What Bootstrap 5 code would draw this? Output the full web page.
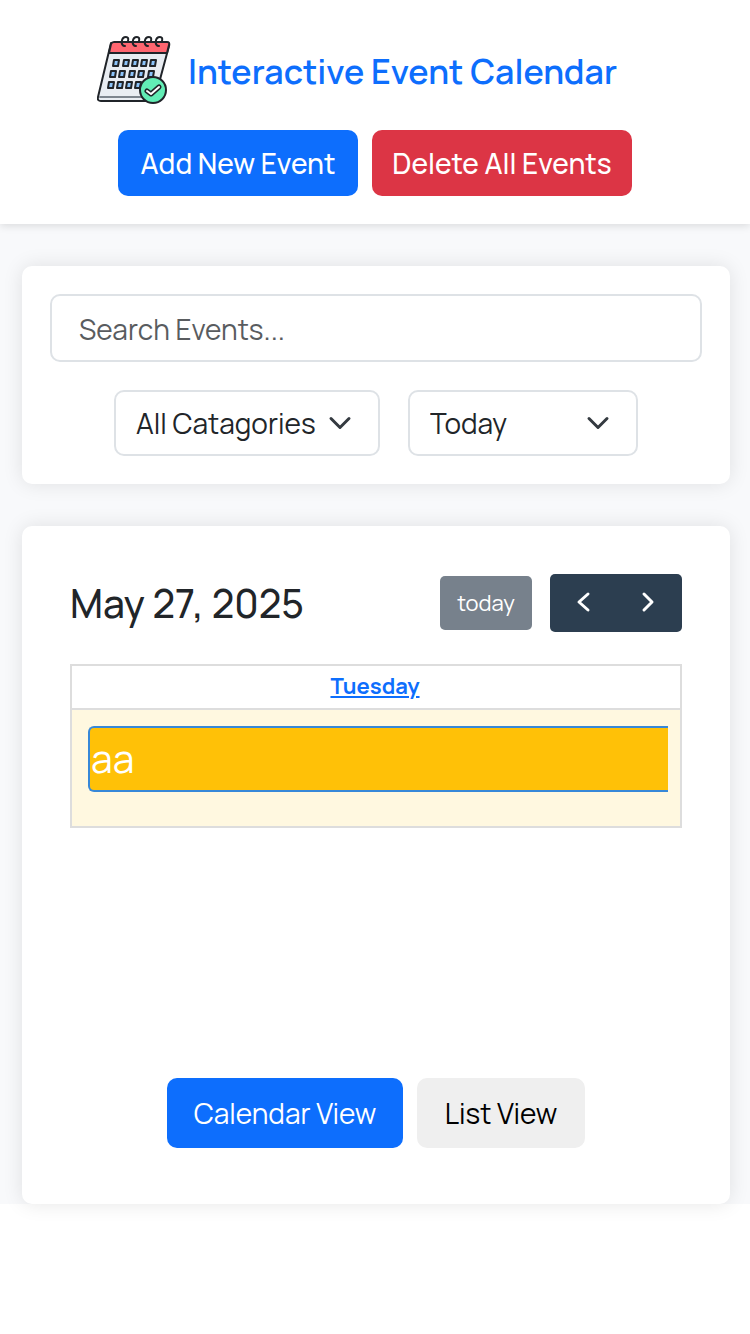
<!DOCTYPE html>
<html lang="en">
<head>
<meta charset="utf-8">
<meta name="viewport" content="width=device-width, initial-scale=1">
<title>Interactive Event Calendar</title>
<link href="https://cdn.jsdelivr.net/npm/bootstrap@5.3.0/dist/css/bootstrap.min.css" rel="stylesheet">
<style>
  body { font-family: Manrope, Inter, "Open Sans", sans-serif; font-size: 28px; background: #fff; }
  .site-header { padding: 28px 20px; box-shadow: 0 2px 8px rgba(0,0,0,.12); }
  .brand-row { height: 88px; gap: 17px; margin-bottom: 14px; padding: 0 36px 2px 0; }
  .brand-row h1 { font-size: 34px; font-weight: 600; }
  .btn-gap { gap: 14px; }
  .app-btn { height: 66px; padding: 0 20px; font-size: 28px; font-weight: 500; border: 0; border-radius: 10px; }
  .add-btn { width: 240px; }
  .delete-btn { width: 260px; }
  .page-area { background: #f8f9fb; padding: 42px 20px 0 22px; }
  .panel { background: #fff; border-radius: 10px; box-shadow: 0 0 20px rgba(0,0,0,.1); }
  .filters { padding: 28px; margin-bottom: 42px; }
  .filters .form-control { height: 68px; padding: 2px 27px 0; font-size: 28px; font-weight: 400; border: 2px solid #dee2e6; border-radius: 10px; }
  .filters .form-control::placeholder { color: #595c5f; opacity: 1; }
  .filter-row { gap: 28px; margin-top: 28px; }
  .filters .form-select { height: 66px; padding: 0 56px 0 20px; font-size: 28px; font-weight: 400; border: 2px solid #dee2e6; border-radius: 10px; background-size: 24px 24px; background-position: right 26px center; }
  .filters .category-select { width: 266px; }
  .filters .date-select { width: 230px; }
  .calendar-panel { padding: 48px 48px 56px; }
  .cal-toolbar { height: 58px; margin-bottom: 32px; }
  .cal-toolbar h2 { font-size: 39px; font-weight: 500; }
  .cal-actions { gap: 18px; }
  .today-btn { width: 92px; height: 54px; padding: 0; font-size: 22px; font-weight: 400; border: 0; border-radius: 5px; }
  .today-btn:disabled { background: #77818c; color: #fff; opacity: 1; }
  .step-group { background: #2c3e50; border-radius: 5px; }
  .step-group .btn { width: 66px; height: 58px; padding: 0; border: 0; color: #fff; display: flex; align-items: center; justify-content: center; }
  .cal-body { min-height: 414px; }
  .cal-table { width: 100%; border-collapse: collapse; }
  .cal-table th, .cal-table td { border: 2px solid #ddd; }
  .cal-table th { height: 44px; padding: 0 2px 2px 0; font-size: 22px; line-height: 24px; font-weight: 700; text-align: center; }
  .cal-table td { height: 118px; padding: 16px 12px 0 16px; background: #fff8e0; vertical-align: top; }
  .event-bar { display: flex; align-items: center; height: 66px; padding: 0 1px 2px; font-size: 39px; line-height: 40px; font-weight: 400; color: #fff; background: #ffc107; border: 2px solid #3788d8; border-right: 0; border-radius: 6px 0 0 6px; text-decoration: none; }
  .view-btn { height: 70px; font-weight: 400; }
  .calendar-view-btn { width: 236px; }
  .list-view-btn { width: 168px; background: #efefef; color: #000; }
</style>
</head>
<body class="min-vh-100">
<header class="site-header bg-white position-relative z-1">
  <div class="brand-row d-flex align-items-center justify-content-center">
    <svg width="74" height="70" viewBox="0 0 74 70" fill="none" stroke="#202429" stroke-width="2" stroke-linejoin="round" stroke-linecap="round" aria-hidden="true">
      <path d="M14 7H70Q73 7 72 10L58 62Q57 65 54 65H4Q0 65 1 61Z" fill="#e9edf2"/>
      <path d="M3 61H52" stroke="#7d858e"/>
      <path d="M17 6H70Q73 6 72 9L70 17H12L14 8Q15 6 17 6Z" fill="#ff6670"/>
      <path d="M28 10C23 10 24 1 29 1Q32 1 31 5M39 10C34 10 35 1 40 1Q43 1 42 5M51 10C46 10 47 1 52 1Q55 1 54 5M62 10C57 10 58 1 63 1Q66 1 65 5"/>
      <g fill="#8cc4fa">
        <path d="M17 24h5l-1 6h-5zM27 24h5l-1 6h-5zM36 24h5l-1 6h-5zM45 24h5l-1 6h-5zM54 24h5l-1 6h-5z"/>
        <path d="M14 35h5l-1 6h-5zM23 35h5l-1 6h-5zM33 35h5l-1 6h-5zM42 35h5l-1 6h-5zM52 35h5l-1 6h-5z"/>
        <path d="M12 46h5l-1 6h-5zM21 46h5l-1 6h-5zM30 46h5l-1 6h-5zM39 46h5l-1 6h-5z"/>
      </g>
      <circle cx="56" cy="54" r="13" fill="#62edb5"/>
      <path d="M50 55L54 58L62 51" stroke-width="5"/>
      <path d="M50 55L54 58L62 51" stroke="#fff" stroke-width="2"/>
    </svg>
    <h1 class="text-primary mb-0">Interactive Event Calendar</h1>
  </div>
  <div class="btn-gap d-flex justify-content-center">
    <button type="button" class="btn btn-primary app-btn add-btn text-nowrap">Add New Event</button>
    <button type="button" class="btn btn-danger app-btn delete-btn text-nowrap">Delete All Events</button>
  </div>
</header>

<main class="page-area">
  <section class="panel filters" aria-label="Filters">
    <input type="text" class="form-control" placeholder="Search Events..." aria-label="Search events">
    <div class="filter-row d-flex justify-content-center">
      <select class="form-select category-select" aria-label="Category">
        <option>All Catagories</option>
      </select>
      <select class="form-select date-select" aria-label="Date range">
        <option>Today</option>
      </select>
    </div>
  </section>

  <section class="panel calendar-panel" aria-label="Calendar">
    <div class="cal-toolbar d-flex align-items-center justify-content-between">
      <h2 class="mb-0">May 27, 2025</h2>
      <div class="cal-actions d-flex align-items-center">
        <button type="button" class="btn today-btn" disabled>today</button>
        <div class="step-group d-flex" role="group" aria-label="Change day">
          <button type="button" class="btn" aria-label="Previous day">
            <svg width="24" height="24" fill="none" stroke="currentColor" stroke-width="3" stroke-linecap="round" stroke-linejoin="round"><path d="M17 3L8 11L17 19"/></svg>
          </button>
          <button type="button" class="btn" aria-label="Next day">
            <svg width="24" height="24" fill="none" stroke="currentColor" stroke-width="3" stroke-linecap="round" stroke-linejoin="round"><path d="M7 3L15 11L7 19"/></svg>
          </button>
        </div>
      </div>
    </div>
    <div class="cal-body">
      <table class="cal-table">
        <thead><tr><th scope="col"><a href="#tuesday">Tuesday</a></th></tr></thead>
        <tbody><tr><td><a href="#event" class="event-bar">aa</a></td></tr></tbody>
      </table>
    </div>
    <div class="btn-gap d-flex justify-content-center">
      <button type="button" class="btn btn-primary app-btn view-btn calendar-view-btn text-nowrap">Calendar View</button>
      <button type="button" class="btn app-btn view-btn list-view-btn text-nowrap">List View</button>
    </div>
  </section>
</main>
<script src="https://cdn.jsdelivr.net/npm/bootstrap@5.3.0/dist/js/bootstrap.bundle.min.js"></script>
</body>
</html>
